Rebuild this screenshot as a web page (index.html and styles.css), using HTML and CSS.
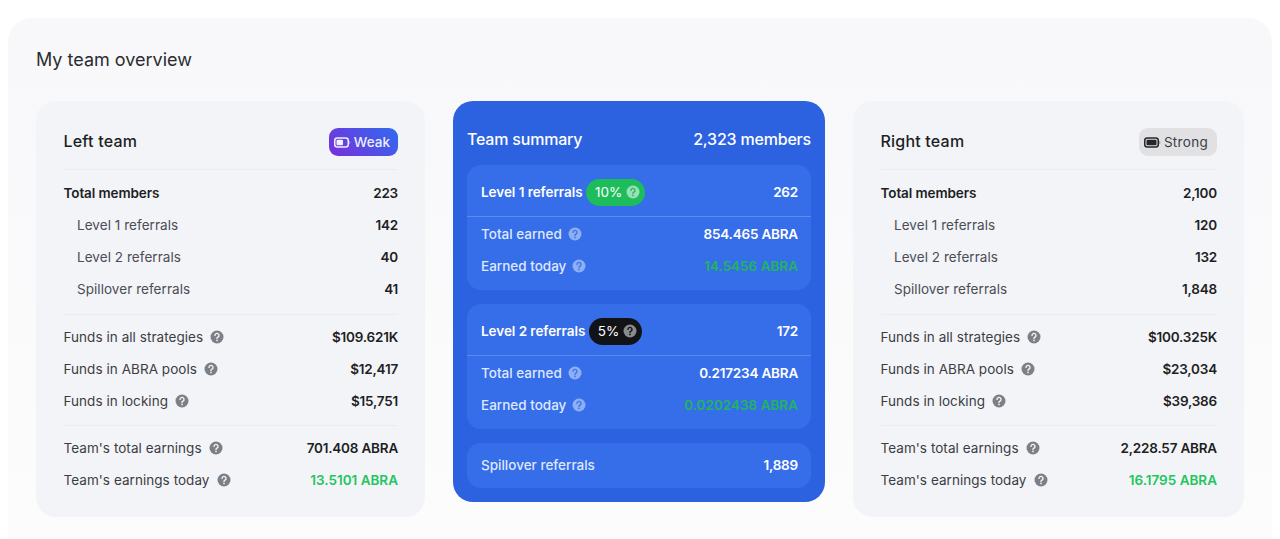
FILE: index.html
```html
<!DOCTYPE html>
<html lang="en">
<head>
    <meta charset="UTF-8">
    <meta name="viewport" content="width=device-width, initial-scale=1.0">
    <title>My team overview</title>
    <link rel="stylesheet" href="styles.css">
</head>
<body>
    <svg class="defs" width="0" height="0">
        <symbol id="help" viewBox="0 0 14 14">
            <circle cx="7" cy="7" r="6.5" fill="currentColor"/>
            <path d="M5 5.4a2 2 0 1 1 3 1.7c-.7.4-1 .7-1 1.3" fill="none" stroke="var(--mark)" stroke-width="1.4" stroke-linecap="round"/>
            <circle cx="7" cy="10.4" r=".85" fill="var(--mark)"/>
        </symbol>
    </svg>

    <main class="panel">
        <h1 class="panel-title">My team overview</h1>

        <div class="teams">
            <section class="card">
                <div class="card-head">
                    <h2>Left team</h2>
                    <span class="badge badge-weak">
                        <svg class="battery" viewBox="0 0 17 11">
                            <rect x=".75" y="1" width="13.5" height="9" rx="2.5" fill="none" stroke="currentColor" stroke-width="1.5"/>
                            <rect x="2.5" y="2.8" width="6.5" height="5.4" rx="1" fill="currentColor"/>
                            <path d="M15.6 3.8c.8.4.8 3 0 3.4z" fill="currentColor"/>
                        </svg>
                        Weak
                    </span>
                </div>
                <div class="group">
                    <div class="row row-total"><span class="label">Total members</span><b>223</b></div>
                    <div class="row sub"><span class="label">Level 1 referrals</span><b>142</b></div>
                    <div class="row sub"><span class="label">Level 2 referrals</span><b>40</b></div>
                    <div class="row sub"><span class="label">Spillover referrals</span><b>41</b></div>
                </div>
                <div class="group">
                    <div class="row"><span class="label">Funds in all strategies <svg class="help"><use href="#help"/></svg></span><b>$109.621K</b></div>
                    <div class="row"><span class="label">Funds in ABRA pools <svg class="help"><use href="#help"/></svg></span><b>$12,417</b></div>
                    <div class="row"><span class="label">Funds in locking <svg class="help"><use href="#help"/></svg></span><b>$15,751</b></div>
                </div>
                <div class="group">
                    <div class="row"><span class="label">Team's total earnings <svg class="help"><use href="#help"/></svg></span><b>701.408 ABRA</b></div>
                    <div class="row"><span class="label">Team's earnings today <svg class="help"><use href="#help"/></svg></span><b class="green">13.5101 ABRA</b></div>
                </div>
            </section>

            <section class="summary">
                <div class="summary-head">
                    <h2>Team summary</h2>
                    <span>2,323 members</span>
                </div>

                <div class="box">
                    <div class="box-head">
                        <span class="box-label">Level 1 referrals <span class="pct pct-green">10% <svg class="help"><use href="#help"/></svg></span></span>
                        <b>262</b>
                    </div>
                    <div class="box-body">
                        <div class="row"><span class="label">Total earned <svg class="help"><use href="#help"/></svg></span><b>854.465 ABRA</b></div>
                        <div class="row"><span class="label">Earned today <svg class="help"><use href="#help"/></svg></span><b class="green">14.5456 ABRA</b></div>
                    </div>
                </div>

                <div class="box">
                    <div class="box-head">
                        <span class="box-label">Level 2 referrals <span class="pct pct-dark">5% <svg class="help"><use href="#help"/></svg></span></span>
                        <b>172</b>
                    </div>
                    <div class="box-body">
                        <div class="row"><span class="label">Total earned <svg class="help"><use href="#help"/></svg></span><b>0.217234 ABRA</b></div>
                        <div class="row"><span class="label">Earned today <svg class="help"><use href="#help"/></svg></span><b class="green">0.0202438 ABRA</b></div>
                    </div>
                </div>

                <div class="box box-single">
                    <span class="label">Spillover referrals</span>
                    <b>1,889</b>
                </div>
            </section>

            <section class="card">
                <div class="card-head">
                    <h2>Right team</h2>
                    <span class="badge badge-strong">
                        <svg class="battery" viewBox="0 0 17 11">
                            <rect x=".75" y="1" width="13.5" height="9" rx="2.5" fill="none" stroke="currentColor" stroke-width="1.5"/>
                            <rect x="2.5" y="2.8" width="10" height="5.4" rx="1" fill="currentColor"/>
                            <path d="M15.6 3.8c.8.4.8 3 0 3.4z" fill="currentColor"/>
                        </svg>
                        Strong
                    </span>
                </div>
                <div class="group">
                    <div class="row row-total"><span class="label">Total members</span><b>2,100</b></div>
                    <div class="row sub"><span class="label">Level 1 referrals</span><b>120</b></div>
                    <div class="row sub"><span class="label">Level 2 referrals</span><b>132</b></div>
                    <div class="row sub"><span class="label">Spillover referrals</span><b>1,848</b></div>
                </div>
                <div class="group">
                    <div class="row"><span class="label">Funds in all strategies <svg class="help"><use href="#help"/></svg></span><b>$100.325K</b></div>
                    <div class="row"><span class="label">Funds in ABRA pools <svg class="help"><use href="#help"/></svg></span><b>$23,034</b></div>
                    <div class="row"><span class="label">Funds in locking <svg class="help"><use href="#help"/></svg></span><b>$39,386</b></div>
                </div>
                <div class="group">
                    <div class="row"><span class="label">Team's total earnings <svg class="help"><use href="#help"/></svg></span><b>2,228.57 ABRA</b></div>
                    <div class="row"><span class="label">Team's earnings today <svg class="help"><use href="#help"/></svg></span><b class="green">16.1795 ABRA</b></div>
                </div>
            </section>
        </div>
    </main>
</body>
</html>
```

FILE: styles.css
```css
html, body {
    height: 100%;
}
body {
    margin: 0;
    padding: 18px 8px 0;
    box-sizing: border-box;
    background-color: #fff;
    font-family: 'Inter', 'Liberation Sans', sans-serif;
    font-size: 13.5px;
    color: #1d1f24;
    --mark: #f4f4f7;
}
h1, h2 {
    margin: 0;
    font-weight: 500;
}
b {
    font-weight: 600;
    letter-spacing: -0.2px;
}
.defs {
    display: block;
    height: 0;
}
.panel {
    height: 100%;
    padding: 31px 28px 0;
    box-sizing: border-box;
    background: linear-gradient(#f8f8fa, #fcfcfd);
    border-radius: 24px 24px 0 0;
}
.panel-title {
    font-size: 18px;
    font-weight: 400;
    line-height: 22px;
    color: #2a2c31;
}
.teams {
    display: grid;
    grid-template-columns: 389px 372px 391px;
    gap: 28px;
    align-items: start;
    margin-top: 30px;
}
.card {
    padding: 27px 27px 21px 27.5px;
    background-color: #f3f4f8;
    border-radius: 20px;
}
.card-head {
    display: flex;
    justify-content: space-between;
    align-items: center;
    padding-bottom: 13px;
    border-bottom: 1px solid #ebebf0;
}
.card-head h2 {
    padding-bottom: 2px;
    font-size: 16px;
    letter-spacing: 0.2px;
}
.badge {
    display: flex;
    align-items: center;
    gap: 3px;
    height: 28px;
    padding: 0 8px 0 5px;
    border-radius: 9px;
    font-size: 13.5px;
}
.badge-weak {
    color: #eef0ff;
    font-weight: 500;
    background: linear-gradient(45deg, #7a2fd8, #2f6bf0);
}
.badge-strong {
    padding-right: 9px;
    color: #3c3e44;
    background-color: #e1e1e4;
    letter-spacing: 0.3px;
}
.battery {
    width: 17px;
    height: 11px;
}
.badge-strong .battery {
    color: #26272b;
}
.group {
    padding: 6px 0 8px;
    border-bottom: 1px solid #ebebf0;
}
.card-head + .group {
    padding: 7px 0 9px;
}
.group:last-child {
    padding-bottom: 0;
    border-bottom: none;
}
.row {
    display: flex;
    justify-content: space-between;
    align-items: center;
    height: 32px;
}
.label {
    display: flex;
    align-items: center;
    gap: 7px;
    letter-spacing: 0.05px;
    color: #3b3d43;
}
.row-total .label {
    font-weight: 600;
    letter-spacing: -0.1px;
    color: #1d1f24;
}
.sub {
    padding-left: 13.5px;
}
.sub .label {
    color: #4b4d54;
}
.help {
    width: 14px;
    height: 14px;
    color: #7d7f86;
}
.green {
    letter-spacing: 0;
    color: #22c55e;
}
.summary {
    padding: 27px 14px 14px;
    color: #fff;
    background-color: #2c62e0;
    border-radius: 20px;
    --mark: #3f74e8;
}
.summary-head {
    display: flex;
    justify-content: space-between;
    align-items: center;
    height: 22px;
    margin-bottom: 15px;
    font-size: 16px;
    font-weight: 500;
    letter-spacing: -0.2px;
}
.summary-head h2 {
    font-size: 16px;
}
.box {
    margin-bottom: 14px;
    background-color: #366de9;
    border-radius: 14px;
}
.box:last-child {
    margin-bottom: 0;
}
.box-head {
    display: flex;
    justify-content: space-between;
    align-items: center;
    height: 52px;
    padding: 3px 13px 0 14px;
    box-sizing: border-box;
    border-bottom: 1px solid #5c8bf0;
}
.box-label {
    display: flex;
    align-items: center;
    gap: 3.5px;
    font-weight: 600;
    letter-spacing: -0.05px;
}
.pct {
    display: flex;
    align-items: center;
    gap: 4px;
    height: 27px;
    padding: 0 5px 0 9px;
    border-radius: 14px;
    font-weight: 400;
    letter-spacing: 0;
}
.pct-green {
    background-color: #1ebd5c;
    --mark: #1ebd5c;
}
.pct-dark {
    background-color: #121316;
    --mark: #121316;
}
.box-body {
    padding: 1px 13px 8px 14px;
}
.box .label {
    gap: 6px;
    font-weight: 500;
    letter-spacing: 0;
    color: #dfe8fd;
}
.box .help {
    color: #8daff4;
}
.box .pct-green .help {
    color: #9adfb5;
}
.box .pct-dark .help {
    color: #8a8b8f;
}
.box .green {
    color: #21b560;
}
.box-single {
    display: flex;
    justify-content: space-between;
    align-items: center;
    height: 45px;
    padding: 0 13px 2px 14px;
    box-sizing: border-box;
}
```
